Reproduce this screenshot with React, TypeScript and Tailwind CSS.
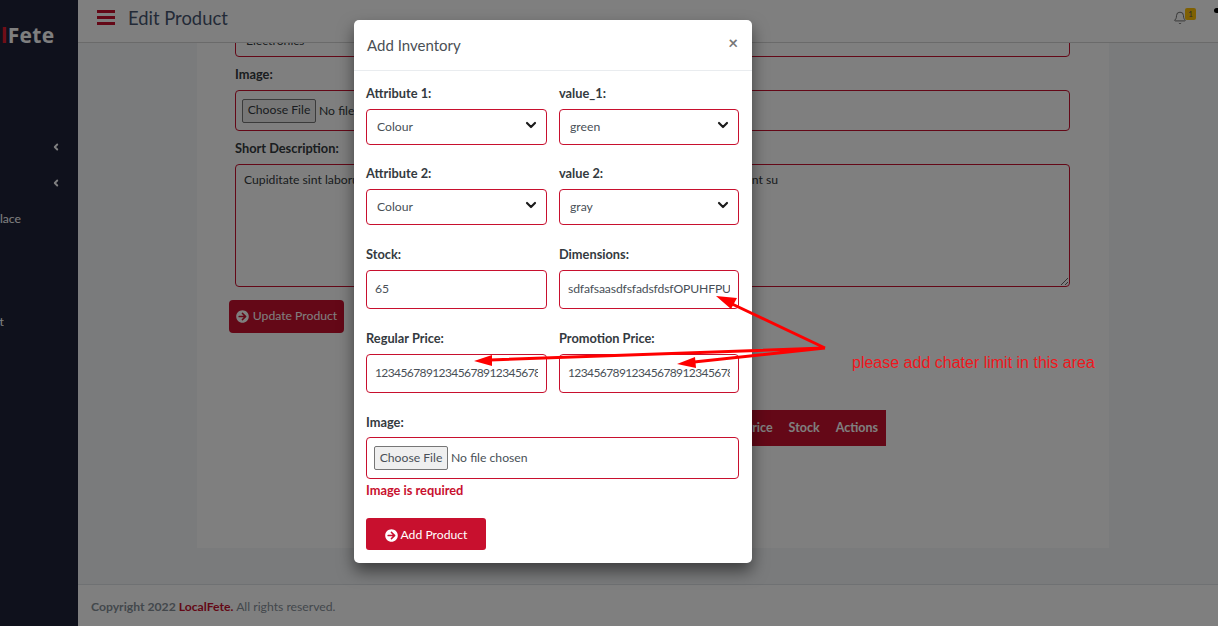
import React from 'react';
import { FaArrowCircleRight } from 'react-icons/fa';
import { Bell, ChevronDown, ChevronLeft } from 'lucide-react';

const fieldBox = 'rounded-[4px] border border-[#c8102e] bg-white';
const fileInput =
  'text-[12.2px] file:mr-[3px] file:h-[24px] file:w-[74px] file:border file:border-[#767676] file:bg-[#efefef] file:rounded-[2px]';

function Label({ children, className = '' }: { children: React.ReactNode; className?: string }) {
  return <div className={`text-[12.8px] leading-5 font-bold text-[#343a40] ${className}`}>{children}</div>;
}

function SelectField({ label, value, className = '' }: { label: string; value: string; className?: string }) {
  return (
    <div className={className}>
      <Label>{label}</Label>
      <div className="relative mt-[6px]">
        <select
          defaultValue={value}
          className={`${fieldBox} h-[36px] w-full appearance-none pl-[10px] pt-[1px] text-[12.2px] text-[#495057] outline-none`}
        >
          <option>{value}</option>
        </select>
        <ChevronDown size={16} strokeWidth={3.2} className="pointer-events-none absolute right-[8px] top-[8px] text-[#1c1c1c]" />
      </div>
    </div>
  );
}

function TextField({ label, value, spacing = 'text-[12.2px]' }: { label: string; value: string; spacing?: string }) {
  return (
    <div>
      <Label>{label}</Label>
      <input
        readOnly
        value={value}
        className={`${fieldBox} mt-[6px] h-[39px] w-full px-[8px] pb-[2px] ${spacing} text-[#495057] outline-none`}
      />
    </div>
  );
}

function Sidebar() {
  return (
    <aside className="w-[78px] shrink-0 overflow-hidden bg-[#1e2239] text-white">
      <div className="h-[129px] pt-[23px] pl-[1px] text-[21px] leading-6 font-bold tracking-[0.3px] font-['Open_Sans',sans-serif]">
        <span className="text-[#e11d2e]">l</span>Fete
      </div>
      <div className="flex h-[36px] items-center justify-end pr-[17px]">
        <ChevronLeft size={10} strokeWidth={4.5} />
      </div>
      <div className="flex h-[35px] items-center justify-end pr-[17px]">
        <ChevronLeft size={10} strokeWidth={4.5} />
      </div>
      <div className="mt-[1px] flex h-[36px] w-[21px] items-center justify-end overflow-hidden text-[12.2px] whitespace-nowrap">
        <span>Marketplace</span>
      </div>
      <div className="mt-[67px] flex h-[36px] w-[4px] items-center justify-end overflow-hidden text-[12.2px] whitespace-nowrap">
        <span>Report</span>
      </div>
    </aside>
  );
}

function Header() {
  return (
    <header className="relative flex h-[43px] shrink-0 items-center border-b border-[#d5d5d5] bg-white">
      <svg width="18" height="15" viewBox="0 0 18 15" className="ml-[19px] -mt-[8px] text-[#c8102e]" fill="currentColor">
        <rect width="18" height="3" />
        <rect y="6" width="18" height="3" />
        <rect y="12" width="18" height="3" />
      </svg>
      <h1 className="ml-[13px] -mt-[5px] text-[18.4px] text-[#46556f]">Edit Product</h1>
      <div className="relative ml-auto mr-[31px] -mt-[6px]">
        <Bell size={14} strokeWidth={1.6} className="text-[#666]" />
        <span className="absolute -right-[9px] -top-[3px] flex h-[12px] w-[11px] items-center justify-center rounded-[2px] bg-[#ffc107] text-[8px] text-[#555]">1</span>
      </div>
      <div className="absolute right-0 top-[8px] h-[5px] w-[4px] rounded-l-full bg-black" />
    </header>
  );
}

function EditForm() {
  return (
    <section className="ml-[119px] h-[505px] w-[912px] overflow-hidden bg-white pl-[38px] pr-[39px] text-[#343a40]">
      <div className={`${fieldBox} -mt-[22px] flex h-[36px] items-center pl-[10px] pt-[5px] text-[12.2px]`}>Electronics</div>
      <Label className="mt-[7px]">Image:</Label>
      <div className={`${fieldBox} mt-[6px] flex h-[41px] items-center pl-[6px]`}>
        <input type="file" className={fileInput} />
      </div>
      <Label className="mt-[7px]">Short Description:</Label>
      <textarea
        readOnly
        value="Cupiditate sint laborum ratione quae nobis eiusmod dolore repudiandae vitae ipsum labore ut sint su"
        className={`${fieldBox} mt-[6px] block h-[123px] w-full px-[8px] py-[6px] text-[12.2px] outline-none`}
      />
      <button className="-ml-[6px] mt-[13px] flex h-[33px] w-[115px] items-center justify-center gap-[4px] rounded-[4px] bg-[#c8102e] text-[12.2px] text-white">
        <FaArrowCircleRight size={13} /> Update Product
      </button>
      <div className="ml-[151px] mt-[77px] flex h-[36px] w-[500px] items-center justify-end gap-[16px] bg-[#c8102e] pr-[8px] text-[12.5px] font-bold text-white">
        <span>Promotion Price</span>
        <span>Stock</span>
        <span>Actions</span>
      </div>
    </section>
  );
}

function AddInventoryModal() {
  return (
    <div className="absolute left-[354px] top-[20px] h-[543px] w-[398px] rounded-[5px] bg-white text-[#495057] shadow-[0_8px_16px_rgba(0,0,0,0.5)]">
      <div className="flex h-[51px] items-center justify-between border-b border-[#e9ecef] pl-[13px] pr-[14px]">
        <h2 className="text-[15px] text-[#4a4f55]">Add Inventory</h2>
        <span className="-mt-[6px] text-[17px] leading-none font-bold text-[#777]">×</span>
      </div>
      <div className="px-[12px] pt-[12px]">
        <div className="grid grid-cols-[181px_180px] gap-x-[12px]">
          <SelectField label="Attribute 1:" value="Colour" />
          <SelectField label="value_1:" value="green" />
          <SelectField label="Attribute 2:" value="Colour" className="mt-[18px]" />
          <SelectField label="value 2:" value="gray" className="mt-[18px]" />
        </div>
        <div className="mt-[19px] grid grid-cols-[181px_180px] gap-x-[12px] gap-y-[19px]">
          <TextField label="Stock:" value="65" />
          <TextField label="Dimensions:" value="sdfafsaasdfsfadsfdsfOPUHFPU" spacing="text-[12.2px] tracking-[-0.15px]" />
          <TextField label="Regular Price:" value="123456789123456789123456789123" spacing="text-[12px] tracking-[-0.6px]" />
          <TextField label="Promotion Price:" value="123456789123456789123456789123" spacing="text-[12px] tracking-[-0.6px]" />
        </div>
        <Label className="mt-[19px]">Image:</Label>
        <div className={`${fieldBox} mt-[5px] flex h-[42px] w-[373px] items-center pl-[7px]`}>
          <input type="file" className={fileInput} />
        </div>
        <p className="mt-[1px] text-[12.8px] leading-5 font-bold text-[#c8102e]">Image is required</p>
        <button className="mt-[18px] flex h-[32px] w-[120px] items-center justify-center gap-[3px] rounded-[3px] bg-[#c8102e] pt-[2px] text-[12.2px] text-white">
          <FaArrowCircleRight size={13} /> Add Product
        </button>
      </div>
    </div>
  );
}

function ReviewArrows() {
  return (
    <svg className="pointer-events-none absolute inset-0" width="1218" height="626" viewBox="0 0 1218 626" fill="none">
      <path d="M825 348 L730 303 M825 348 L490 360 M825 348 L694 362" stroke="#ff0000" strokeWidth="3" />
      <path d="M716 296 L737 298 L731 309 Z M474 361 L492 355 L492 366 Z M677 364 L695 357 L696 368 Z" fill="#ff0000" />
    </svg>
  );
}

export default function App() {
  return (
    <div className="relative flex h-[626px] w-[1218px] overflow-hidden bg-[#f4f6f9] font-['Lato',sans-serif]">
      <Sidebar />
      <main className="flex min-w-0 flex-1 flex-col">
        <Header />
        <div className="min-h-0 flex-1">
          <EditForm />
        </div>
        <footer className="flex h-[42px] shrink-0 items-center border-t border-[#dee2e6] bg-white pl-[13px] pt-[4px] text-[12.2px] text-[#869099]">
          <b>Copyright 2022&nbsp;</b>
          <b className="text-[#c8102e]">LocalFete.</b>
          <span>&nbsp;All rights reserved.</span>
        </footer>
      </main>
      <div className="absolute inset-0 bg-black/50" />
      <AddInventoryModal />
      <ReviewArrows />
      <p className="absolute left-[852px] top-[354px] font-['Liberation_Sans',sans-serif] text-[16px] leading-[18px] text-[#f0161c]">
        please add chater limit in this area
      </p>
    </div>
  );
}
